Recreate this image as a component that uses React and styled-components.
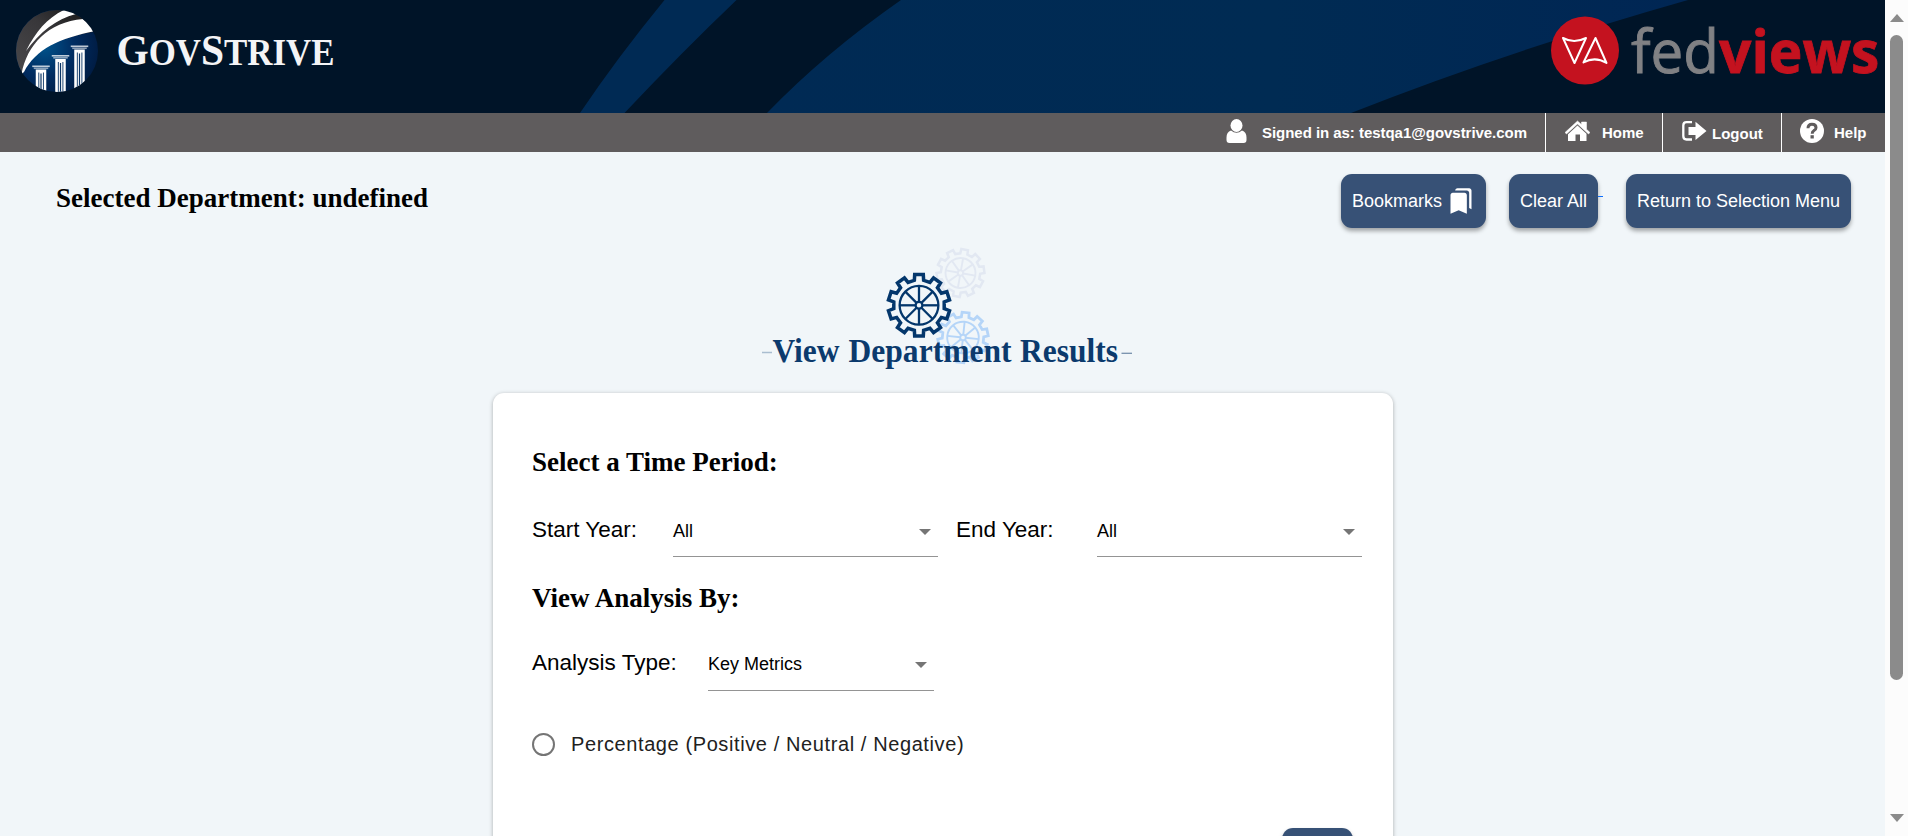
import React from "react";
import styled, { createGlobalStyle } from "styled-components";
import { MdBookmarks } from "react-icons/md";

const GlobalStyle = createGlobalStyle`
  * { box-sizing: border-box; }
  html, body { margin: 0; height: 836px; overflow: hidden; }
  body { font-family: "Liberation Sans", Arial, sans-serif; color: #000; }
`;

const Shell = styled.div`
  display: flex;
  width: 1908px;
  height: 836px;
  overflow: hidden;
`;

const Page = styled.div`
  width: 1885px;
  height: 836px;
  overflow: hidden;
  background: #f1f6f9;
`;

const Banner = styled.header`
  display: flex;
  height: 113px;
  background: #001428;
  svg { display: block; }
`;

const NavBar = styled.nav`
  display: flex;
  justify-content: flex-end;
  height: 39px;
  background: #5f5c5d;
`;

const NavItem = styled.div`
  display: flex;
  align-items: flex-start;
  width: ${(p) => p.$width}px;
  padding-left: ${(p) => p.$pad}px;
  gap: ${(p) => p.$gap}px;
  border-left: ${(p) => (p.$divided ? "1px solid #fff" : "0")};
  color: #fff;
  font-size: 15px;
  font-weight: bold;
  white-space: nowrap;
  svg { flex: none; display: block; margin-top: 6px; }
`;

const NavText = styled.span`
  line-height: 17px;
  padding-top: ${(p) => p.$top || 11}px;
  letter-spacing: ${(p) => p.$track || 0}px;
`;

const Toolbar = styled.div`
  display: flex;
  justify-content: space-between;
  height: 88px;
  padding: 22px 34px 0 56px;
`;

const Heading = styled.h2`
  margin: 0;
  font-family: "Liberation Serif", "Times New Roman", serif;
  font-size: 27px;
  font-weight: bold;
  line-height: 32px;
  white-space: nowrap;
`;

const DepartmentHeading = styled(Heading)`
  padding-top: 8px;
`;

const Actions = styled.div`
  display: flex;
  align-items: flex-start;
`;

const ActionButton = styled.button`
  display: flex;
  align-items: center;
  justify-content: center;
  flex: none;
  gap: 5px;
  width: ${(p) => p.$width}px;
  height: 54px;
  padding: 0;
  border: 0;
  border-radius: 11px;
  background: #375176;
  color: #fff;
  font: 18px "Liberation Sans", Arial, sans-serif;
  white-space: nowrap;
  box-shadow: 0 3px 4px rgba(0, 0, 0, 0.34);
`;

const LinkGap = styled.span`
  width: 28px;
  padding-top: 22px;
  &::before {
    content: "";
    display: block;
    width: 5px;
    height: 1px;
    background: #0d6efd;
  }
`;

const Spacer = styled.span`
  width: 23px;
`;

const Hero = styled.div`
  height: 153px;
  padding-left: 740px;
  svg { display: block; }
`;

const Card = styled.section`
  width: 900px;
  height: 520px;
  margin-left: 493px;
  padding: 53px 31px 0 39px;
  border-radius: 11px;
  background: #fff;
  box-shadow: 0 1px 4px rgba(0, 0, 0, 0.3);
`;

const Field = styled.div`
  display: flex;
`;

const FieldRow = styled.div`
  display: flex;
  gap: 18px;
  padding-top: ${(p) => p.$top}px;
`;

const Label = styled.label`
  width: ${(p) => p.$width}px;
  font-size: 22.5px;
  line-height: 26px;
  white-space: nowrap;
`;

const Select = styled.div`
  display: flex;
  justify-content: space-between;
  width: ${(p) => p.$width}px;
  height: ${(p) => p.$height || 40}px;
  padding: 4px 7px 0 0;
  border-bottom: 1px solid #949494;
  font-size: 18px;
  line-height: 21px;
  &::after {
    content: "";
    height: 0;
    margin-top: 8px;
    border: 6px solid transparent;
    border-top: 6px solid #757575;
    border-bottom: 0;
  }
`;

const RadioRow = styled.label`
  display: flex;
  align-items: center;
  gap: 16px;
  padding-top: 41px;
  color: #212121;
  font-size: 20px;
  letter-spacing: 0.6px;
  line-height: 24px;
  white-space: nowrap;
`;

const RadioCircle = styled.span`
  width: 23px;
  height: 23px;
  border: 2px solid #757575;
  border-radius: 50%;
`;

const CardFooter = styled.div`
  display: flex;
  justify-content: flex-end;
  padding: 72px 9px 0 0;
`;

const ScrollTrack = styled.aside`
  display: flex;
  flex-direction: column;
  align-items: center;
  width: 23px;
  padding: 14px 0;
  background: #fcfcfc;
`;

const ScrollArrow = styled.i`
  border: 7.5px solid transparent;
  ${(p) =>
    p.$down
      ? "border-top: 8px solid #8b8b8b; border-bottom: 0; margin-top: auto;"
      : "border-bottom: 8px solid #8b8b8b; border-top: 0;"}
`;

const ScrollThumb = styled.div`
  width: 13px;
  height: 645px;
  margin-top: 13px;
  border-radius: 7px;
  background: #8b8b8b;
`;

function Pillar({ x, y, h, w }) {
  return (
    <g fill="#fff">
      <rect x={x - w / 2 - 3.5} y={y} width={w + 7} height="1.6" opacity="0.75" />
      <rect x={x - w / 2 - 2} y={y + 2} width={w + 4} height="1.6" opacity="0.55" />
      <rect x={x - w / 2} y={y + 4} width={w} height={h} />
      <g fill="#0a3566">
        <rect x={x - w / 2 + 2.6} y={y + 7} width="0.9" height={h} />
        <rect x={x - 0.6} y={y + 8} width="1.2" height={h} />
        <rect x={x + w / 2 - 3.3} y={y + 7} width="0.9" height={h} />
      </g>
    </g>
  );
}

function BannerArt() {
  return (
    <svg width="1885" height="113" viewBox="0 0 1885 113">
      <defs>
        <linearGradient id="swoop" x1="0" x2="1">
          <stop offset="0" stopColor="#002a54" />
          <stop offset="0.55" stopColor="#002b53" />
          <stop offset="1" stopColor="#002654" />
        </linearGradient>
        <linearGradient id="slate" x1="0" y1="1" x2="1" y2="0">
          <stop offset="0" stopColor="#4b4a4c" />
          <stop offset="0.55" stopColor="#38373a" />
          <stop offset="1" stopColor="#111" />
        </linearGradient>
        <radialGradient id="globe" cx="0.35" cy="0.45" r="0.65">
          <stop offset="0" stopColor="#00528a" />
          <stop offset="0.55" stopColor="#002c61" />
          <stop offset="1" stopColor="#001d45" />
        </radialGradient>
        <clipPath id="disc"><circle cx="57" cy="51" r="41" /></clipPath>
      </defs>
      <path d="M664.500 0H736.500Q678 54 624.500 113H580Q619 54 664.500 0Z" fill="#002a54" display="none" />
      <path d="M664.500 0H736.500Q682 52 624.500 113H580Q617 58 664.500 0Z" fill="#002a54" />
      <path d="M901 0H1688Q1505 52 1351 113H767Q825 53 901 0Z" fill="url(#swoop)" />

      <g clipPath="url(#disc)">
        <rect x="16" y="10" width="82" height="82" fill="url(#globe)" />
        <path d="M16 10H98V31C62 37 31 48 22 76L16 78Z" fill="url(#slate)" />
        <path d="M21.500 74C27 45 48 22 83 19L96 31C59 38 36 49 24 72Z" fill="#fff" />
        <path d="M26 51C36 31 48 17 66 9L76 14C56 19 40 32 26 51Z" fill="#fff" />
        <Pillar x={41} y={65.500} h={30} w={10.500} />
        <Pillar x={60.500} y={55} h={42} w={10.500} />
        <Pillar x={79.500} y={45.500} h={40} w={10.500} />
      </g>

      <text x="116.500" y="65" textLength="218" lengthAdjust="spacingAndGlyphs" fill="#f4f4f6" fontFamily="Liberation Serif, serif" fontWeight="bold" fontSize="44">
        G<tspan fontSize="37">OV</tspan>S<tspan fontSize="37">TRIVE</tspan>
      </text>

      <circle cx="1585" cy="50.500" r="34" fill="#c4121f" />
      <g fill="none" stroke="#fff" strokeWidth="2" strokeLinejoin="round">
        <path d="M1563 38Q1574 44 1586 38L1574.500 63Z" />
        <path d="M1595.500 38L1606.500 63Q1595 56 1583.500 62.500Z" />
      </g>
      <text x="1631" y="73" textLength="88" lengthAdjust="spacingAndGlyphs" fill="#808184" stroke="#808184" strokeWidth="0.9" fontFamily="Open Sans, sans-serif" fontSize="60.500">fed</text>
      <text transform="translate(1719 73) scale(0.957 1)" fill="#c4121f" stroke="#c4121f" strokeWidth="0.8" fontFamily="Open Sans, sans-serif" fontWeight="bold" fontSize="59.500">views</text>
    </svg>
  );
}

function gearOutline(r) {
  const points = [];
  const root = r * 0.82;
  for (let i = 0; i < 10; i++) {
    [[-10.500, root], [-8, r], [8, r], [10.500, root]].forEach(([offset, radius]) => {
      const a = ((i * 36 + offset - 90) * Math.PI) / 180;
      points.push(`${(radius * Math.cos(a)).toFixed(2)},${(radius * Math.sin(a)).toFixed(2)}`);
    });
  }
  return points.join(" ");
}

function Gear({ cx, cy, r, color, turn = 0, weight = 2, rim = weight }) {
  return (
    <g transform={`translate(${cx} ${cy}) rotate(${turn})`} fill="none" stroke={color} strokeWidth={weight}>
      <polygon points={gearOutline(r)} strokeWidth={rim} />
      <circle r={r * 0.625} />
      <circle r={r * 0.11} />
      {[0, 45, 90, 135, 180, 225, 270, 315].map((a) => (
        <line key={a} x1="0" y1={-r * 0.11} x2="0" y2={-r * 0.625} transform={`rotate(${a})`} />
      ))}
    </g>
  );
}

function HeroArt() {
  return (
    <svg width="420" height="150" viewBox="740 240 420 150">
      <Gear cx={960.500} cy={273} r={24} color="#e2e8f2" turn={10} weight={1.9} rim={2.500} />
      <Gear cx={963} cy={337.500} r={25.300} color="#b5d5f8" turn={6} weight={1.9} rim={2.800} />
      <Gear cx={919} cy={305.300} r={31} color="#04376c" weight={2.300} rim={3.500} />
      <path d="M762 352.500H772" stroke="#a9bdd0" strokeWidth="1.500" />
      <path d="M1121.500 353.300H1132" stroke="#7590ac" strokeWidth="1.300" />
      <g fill="#0b3a6d" fontFamily="Liberation Serif, serif" fontWeight="bold" fontSize="33">
        <text x="772.500" y="361.500" textLength="67" lengthAdjust="spacingAndGlyphs">View</text>
        <text x="848.500" y="361.500" textLength="163" lengthAdjust="spacingAndGlyphs">Department</text>
        <text x="1020" y="361.500" textLength="98" lengthAdjust="spacingAndGlyphs">Results</text>
      </g>
    </svg>
  );
}

const UserIcon = () => (
  <svg width="21" height="24" viewBox="0 0 21 24" fill="#fff">
    <ellipse cx="10.500" cy="6.500" rx="6" ry="6.500" />
    <path d="M5 11.500Q10.500 16 16 11.500Q20.500 13 20.500 18.500V21Q20.500 24 17.500 24H3.500Q.5 24 .5 21V18.500Q.5 13 5 11.500Z" />
  </svg>
);

const HomeIcon = () => (
  <svg width="25" height="24" viewBox="0 0 25 24" fill="#fff">
    <path d="M12.500 2L16.500 5.600V3H21.500V10.200L25 13.500L23.500 15L12.500 5L1.500 15L0 13.500Z" stroke="#fff" strokeWidth="0.5" />
    <path d="M12.500 6.500L21.500 14.800V22H15V15.500H10.500V22H3V15.300Z" />
  </svg>
);

const LogoutIcon = () => (
  <svg width="25" height="24" viewBox="0 0 25 24">
    <path d="M10 3.200H4.500Q1.300 3.200 1.300 6.500V17Q1.300 20.500 4.500 20.500H10" fill="none" stroke="#fff" strokeWidth="2.300" />
    <path d="M6.500 8H13.500V2.700L24.500 12L13.500 21V16H6.500Z" fill="#fff" />
  </svg>
);

const HelpIcon = () => (
  <svg width="24" height="24" viewBox="0 0 24 24">
    <circle cx="12" cy="12" r="12" fill="#fff" />
    <path d="M8 9.300Q8 5.200 12 5.200Q16 5.200 16 8.700Q16 10.600 13.800 11.700Q12.200 12.600 12.200 14.700" fill="none" stroke="#5f5c5d" strokeWidth="3" />
    <rect x="10.500" y="16.200" width="3.300" height="3.300" fill="#5f5c5d" />
  </svg>
);

export default function App() {
  return (
    <>
      <GlobalStyle />
      <Shell>
        <Page>
          <Banner><BannerArt /></Banner>
          <NavBar>
            <NavItem $width={319} $pad={0} $gap={15}>
              <UserIcon /><NavText $track={-0.04}>Signed in as: testqa1@govstrive.com</NavText>
            </NavItem>
            <NavItem $width={117} $pad={19} $gap={12} $divided>
              <HomeIcon /><NavText>Home</NavText>
            </NavItem>
            <NavItem $width={119} $pad={19} $gap={5} $divided>
              <LogoutIcon /><NavText $top={12}>Logout</NavText>
            </NavItem>
            <NavItem $width={104} $pad={18} $gap={10} $divided>
              <HelpIcon /><NavText>Help</NavText>
            </NavItem>
          </NavBar>
          <Toolbar>
            <DepartmentHeading>Selected Department: undefined</DepartmentHeading>
            <Actions>
              <ActionButton $width={145}>Bookmarks <MdBookmarks size={28} /></ActionButton>
              <Spacer />
              <ActionButton $width={89}>Clear All</ActionButton>
              <LinkGap />
              <ActionButton $width={225}>Return to Selection Menu</ActionButton>
            </Actions>
          </Toolbar>
          <Hero><HeroArt /></Hero>
          <Card>
            <Heading>Select a Time Period:</Heading>
            <FieldRow $top={39}>
              <Field>
                <Label $width={141}>Start Year:</Label>
                <Select $width={265}>All</Select>
              </Field>
              <Field>
                <Label $width={141}>End Year:</Label>
                <Select $width={265}>All</Select>
              </Field>
            </FieldRow>
            <FieldRow $top={25}><Heading>View Analysis By:</Heading></FieldRow>
            <FieldRow $top={36}>
              <Field>
                <Label $width={176}>Analysis Type:</Label>
                <Select $width={226} $height={41}>Key Metrics</Select>
              </Field>
            </FieldRow>
            <RadioRow><RadioCircle />Percentage (Positive / Neutral / Negative)</RadioRow>
            <CardFooter><ActionButton $width={71} aria-label="Next" /></CardFooter>
          </Card>
        </Page>
        <ScrollTrack>
          <ScrollArrow />
          <ScrollThumb />
          <ScrollArrow $down />
        </ScrollTrack>
      </Shell>
    </>
  );
}
